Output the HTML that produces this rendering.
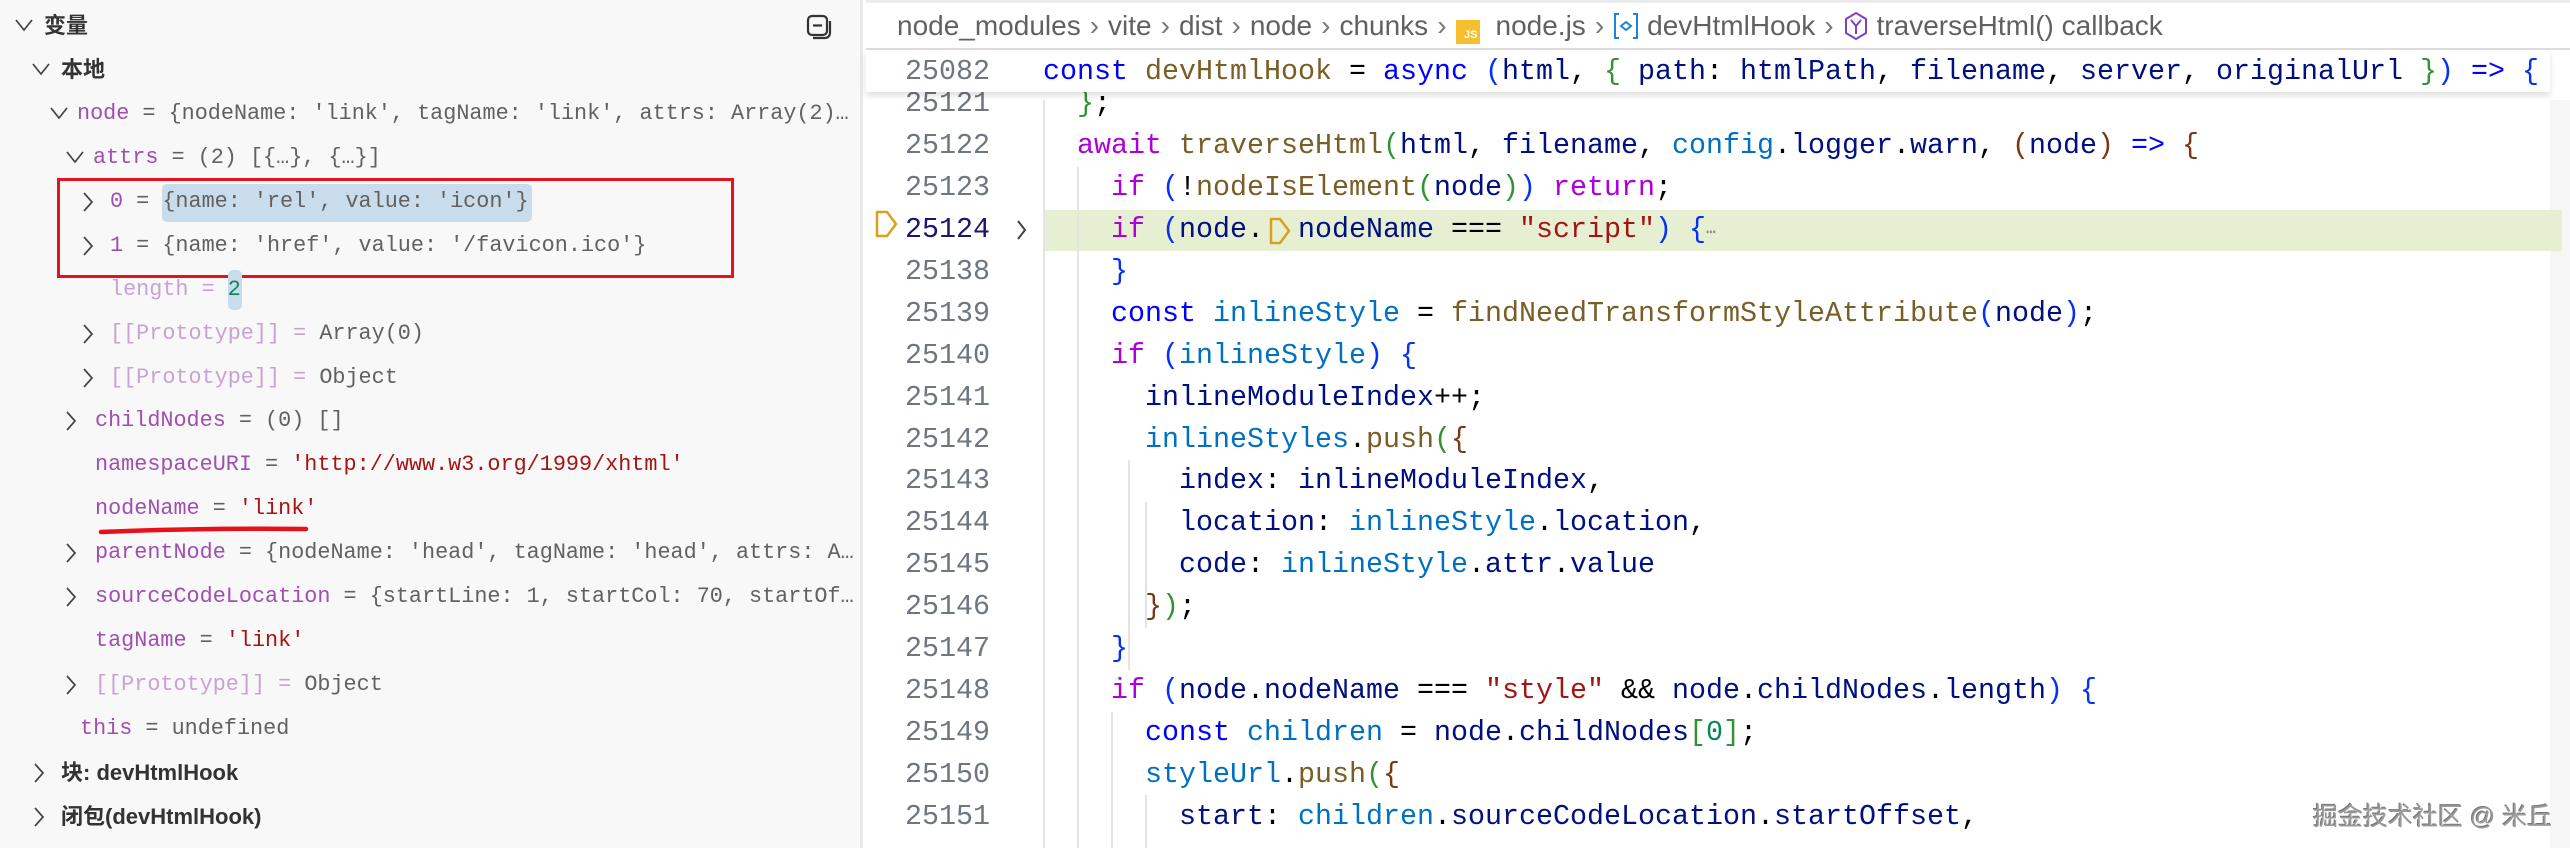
<!DOCTYPE html>
<html><head><meta charset="utf-8">
<style>
*{margin:0;padding:0;box-sizing:border-box}
body{width:2570px;height:848px;overflow:hidden;background:#fff;position:relative;font-family:"Liberation Sans","Noto Sans CJK SC",sans-serif}
#left{position:absolute;left:0;top:0;width:863px;height:848px;background:#f8f8f8;border-right:3px solid #e8e8e8}
.r{position:absolute;height:44px;line-height:44px;white-space:pre;font-family:"Liberation Mono",monospace;font-size:21.8px;color:#616161}
.h{font-family:"Liberation Sans","Noto Sans CJK SC",sans-serif;font-weight:bold;color:#333;font-size:22px}
.ch{position:absolute;width:20px;height:44px}
.pn{color:#a04fb0}.pl{color:#c9a2d4}.st{color:#a31515}.nm{color:#098658}
#bc{position:absolute;left:897px;top:0;height:49px;line-height:52px;font-size:28px;color:#616161;white-space:pre}
.sep{color:#777;margin:0 9px}
.cl{position:absolute;left:0;height:42px;line-height:42px;white-space:pre;font-family:"Liberation Mono",monospace;font-size:28.33px;color:#000}
.ln{position:absolute;left:880px;width:110px;text-align:right;color:#6e7681}
.cd{position:absolute;left:1043px}
.k{color:#0000ff}.c{color:#af00db}.f{color:#795e26}.v{color:#001080}.p{color:#0070c1}.s{color:#a31515}.n{color:#098658}
.b1{color:#0431fa}.b2{color:#319331}.b3{color:#7b3814}
.g{position:absolute;width:2px;background:#e4e4e4}
</style></head><body>
<div id="left">
<div class="r h" style="left:44px;top:4px">变量</div>
<svg class="ch" style="left:14px;top:4px" viewBox="0 0 20 44"><path d="M2 16l8 10 8-10" fill="none" stroke="#444" stroke-width="1.7"/></svg>
<svg style="position:absolute;left:806px;top:14px" width="27" height="26" viewBox="0 0 27 26"><rect x="2" y="2" width="19" height="19" rx="4" fill="none" stroke="#333" stroke-width="2.2"/><path d="M7 11.5h9" stroke="#333" stroke-width="2.2"/><path d="M24 7v12a5 5 0 0 1-5 5H7" fill="none" stroke="#333" stroke-width="2.2"/></svg>

<div class="r h" style="left:61px;top:48px">本地</div>
<svg class="ch" style="left:31px;top:48px" viewBox="0 0 20 44"><path d="M2 16l8 10 8-10" fill="none" stroke="#444" stroke-width="1.7"/></svg>

<svg class="ch" style="left:49px;top:92px" viewBox="0 0 20 44"><path d="M2 16l8 10 8-10" fill="none" stroke="#444" stroke-width="1.7"/></svg>
<div class="r" style="left:77px;top:92px"><span class="pn">node</span> = {nodeName: 'link', tagName: 'link', attrs: Array(2)…</div>

<svg class="ch" style="left:65px;top:136px" viewBox="0 0 20 44"><path d="M2 16l8 10 8-10" fill="none" stroke="#444" stroke-width="1.7"/></svg>
<div class="r" style="left:93px;top:136px"><span class="pn">attrs</span> = (2) [{…}, {…}]</div>

<div style="position:absolute;left:162px;top:184px;width:370px;height:38px;background:#c9dceb;border-radius:5px"></div>
<svg class="ch" style="left:78px;top:180px" viewBox="0 0 20 44"><path d="M6 13l8 9-8 9" fill="none" stroke="#444" stroke-width="1.7"/></svg>
<div class="r" style="left:110px;top:180px"><span class="pn">0</span> = {name: 'rel', value: 'icon'}</div>

<svg class="ch" style="left:78px;top:224px" viewBox="0 0 20 44"><path d="M6 13l8 9-8 9" fill="none" stroke="#444" stroke-width="1.7"/></svg>
<div class="r" style="left:110px;top:224px"><span class="pn">1</span> = {name: 'href', value: '/favicon.ico'}</div>

<div style="position:absolute;left:57px;top:178px;width:677px;height:100px;border:3.5px solid #e8101c"></div>

<div style="position:absolute;left:228px;top:270px;width:14px;height:40px;background:#c9dceb;border-radius:5px"></div>
<div class="r" style="left:110px;top:268px"><span class="pl">length</span> <span class="pl">=</span> <span class="nm">2</span></div>

<svg class="ch" style="left:78px;top:312px" viewBox="0 0 20 44"><path d="M6 13l8 9-8 9" fill="none" stroke="#444" stroke-width="1.7"/></svg>
<div class="r" style="left:110px;top:312px"><span class="pl">[[Prototype]]</span> <span class="pl">=</span> Array(0)</div>

<svg class="ch" style="left:78px;top:356px" viewBox="0 0 20 44"><path d="M6 13l8 9-8 9" fill="none" stroke="#444" stroke-width="1.7"/></svg>
<div class="r" style="left:110px;top:356px"><span class="pl">[[Prototype]]</span> <span class="pl">=</span> Object</div>

<svg class="ch" style="left:61px;top:399px" viewBox="0 0 20 44"><path d="M6 13l8 9-8 9" fill="none" stroke="#444" stroke-width="1.7"/></svg>
<div class="r" style="left:95px;top:399px"><span class="pn">childNodes</span> = (0) []</div>

<div class="r" style="left:95px;top:443px"><span class="pn">namespaceURI</span> = <span class="st">'http://www.w3.org/1999/xhtml'</span></div>
<div class="r" style="left:95px;top:487px"><span class="pn">nodeName</span> = <span class="st">'link'</span></div>
<svg style="position:absolute;left:98px;top:524px" width="212" height="12"><path d="M3 8 Q100 4 208 5" stroke="#e8101c" stroke-width="4.5" fill="none" stroke-linecap="round"/></svg>

<svg class="ch" style="left:61px;top:531px" viewBox="0 0 20 44"><path d="M6 13l8 9-8 9" fill="none" stroke="#444" stroke-width="1.7"/></svg>
<div class="r" style="left:95px;top:531px"><span class="pn">parentNode</span> = {nodeName: 'head', tagName: 'head', attrs: A…</div>

<svg class="ch" style="left:61px;top:575px" viewBox="0 0 20 44"><path d="M6 13l8 9-8 9" fill="none" stroke="#444" stroke-width="1.7"/></svg>
<div class="r" style="left:95px;top:575px"><span class="pn">sourceCodeLocation</span> = {startLine: 1, startCol: 70, startOf…</div>

<div class="r" style="left:95px;top:619px"><span class="pn">tagName</span> = <span class="st">'link'</span></div>

<svg class="ch" style="left:61px;top:663px" viewBox="0 0 20 44"><path d="M6 13l8 9-8 9" fill="none" stroke="#444" stroke-width="1.7"/></svg>
<div class="r" style="left:95px;top:663px"><span class="pl">[[Prototype]]</span> <span class="pl">=</span> Object</div>

<div class="r" style="left:80px;top:707px"><span class="pn">this</span> = undefined</div>

<svg class="ch" style="left:29px;top:751px" viewBox="0 0 20 44"><path d="M6 13l8 9-8 9" fill="none" stroke="#444" stroke-width="1.7"/></svg>
<div class="r h" style="left:61px;top:751px">块: devHtmlHook</div>
<svg class="ch" style="left:29px;top:795px" viewBox="0 0 20 44"><path d="M6 13l8 9-8 9" fill="none" stroke="#444" stroke-width="1.7"/></svg>
<div class="r h" style="left:61px;top:795px">闭包(devHtmlHook)</div>
</div>

<div style="position:absolute;left:866px;top:0;width:1704px;height:3px;background:#ececec"></div>
<div style="position:absolute;left:866px;top:48px;width:1704px;height:2px;background:#dcdcdc"></div>
<div id="bc">node_modules<span class="sep">›</span>vite<span class="sep">›</span>dist<span class="sep">›</span>node<span class="sep">›</span>chunks<span class="sep">›</span><span style="display:inline-block;width:24px;height:24px;background:#f5c02b;color:#fff;font-size:11px;line-height:30px;text-align:right;vertical-align:-3px;margin-right:16px;padding-right:2px;font-weight:bold">JS</span>node.js<span class="sep">›</span><svg width="26" height="28" viewBox="0 0 26 28" style="vertical-align:-5px;margin-right:8px"><path d="M6 2H2v24h4M20 2h4v24h-4" fill="none" stroke="#1a85d6" stroke-width="2"/><path d="M8 14l5-4 5 4-5 4z" fill="none" stroke="#1a85d6" stroke-width="2"/></svg>devHtmlHook<span class="sep">›</span><svg width="26" height="30" viewBox="0 0 26 30" style="vertical-align:-6px;margin-right:8px"><path d="M13 2l10 6v14l-10 6-10-6V8z" fill="none" stroke="#7f3fbf" stroke-width="2"/><path d="M8 9l5 6 5-6M13 15v8" fill="none" stroke="#7f3fbf" stroke-width="2"/></svg>traverseHtml() callback</div>

<div style="position:absolute;left:2550px;top:100px;width:20px;height:748px;background:#f6f6f6"></div>

<div style="position:absolute;left:1043px;top:210px;width:1519px;height:41px;background:#e7efd3"></div>

<div class="g" style="left:1043px;top:100px;height:748px"></div>
<div class="g" style="left:1077px;top:167px;height:681px"></div>
<div class="g" style="left:1111px;top:712px;height:136px"></div>
<div class="g" style="left:1128px;top:460px;height:210px"></div>
<div class="g" style="left:1145px;top:502px;height:126px"></div>
<div class="g" style="left:1145px;top:795px;height:53px"></div>

<div class="cl" style="top:83px"><span class="ln">25121</span><span class="cd">  <span class="b2">}</span>;</span></div>
<div class="cl" style="top:125px"><span class="ln">25122</span><span class="cd">  <span class="c">await</span> <span class="f">traverseHtml</span><span class="b2">(</span><span class="v">html</span>, <span class="v">filename</span>, <span class="p">config</span>.<span class="v">logger</span>.<span class="v">warn</span>, <span class="b3">(</span><span class="v">node</span><span class="b3">)</span> <span class="k">=&gt;</span> <span class="b3">{</span></span></div>
<div class="cl" style="top:167px"><span class="ln">25123</span><span class="cd">    <span class="c">if</span> <span class="b1">(</span>!<span class="f">nodeIsElement</span><span class="b2">(</span><span class="v">node</span><span class="b2">)</span><span class="b1">)</span> <span class="c">return</span>;</span></div>
<div class="cl" style="top:209px"><span class="ln" style="color:#1d1570">25124</span><span class="cd">    <span class="c">if</span> <span class="b1">(</span><span class="v">node</span>.  <span class="v">nodeName</span> === <span class="s">"script"</span><span class="b1">)</span> <span class="b1">{</span><span style="color:#888;font-size:16px">⋯</span></span></div>
<div class="cl" style="top:251px"><span class="ln">25138</span><span class="cd">    <span class="b1">}</span></span></div>
<div class="cl" style="top:293px"><span class="ln">25139</span><span class="cd">    <span class="k">const</span> <span class="p">inlineStyle</span> = <span class="f">findNeedTransformStyleAttribute</span><span class="b1">(</span><span class="v">node</span><span class="b1">)</span>;</span></div>
<div class="cl" style="top:335px"><span class="ln">25140</span><span class="cd">    <span class="c">if</span> <span class="b1">(</span><span class="p">inlineStyle</span><span class="b1">)</span> <span class="b1">{</span></span></div>
<div class="cl" style="top:377px"><span class="ln">25141</span><span class="cd">      <span class="v">inlineModuleIndex</span>++;</span></div>
<div class="cl" style="top:419px"><span class="ln">25142</span><span class="cd">      <span class="p">inlineStyles</span>.<span class="f">push</span><span class="b2">(</span><span class="b3">{</span></span></div>
<div class="cl" style="top:460px"><span class="ln">25143</span><span class="cd">        <span class="v">index</span>: <span class="v">inlineModuleIndex</span>,</span></div>
<div class="cl" style="top:502px"><span class="ln">25144</span><span class="cd">        <span class="v">location</span>: <span class="p">inlineStyle</span>.<span class="v">location</span>,</span></div>
<div class="cl" style="top:544px"><span class="ln">25145</span><span class="cd">        <span class="v">code</span>: <span class="p">inlineStyle</span>.<span class="v">attr</span>.<span class="v">value</span></span></div>
<div class="cl" style="top:586px"><span class="ln">25146</span><span class="cd">      <span class="b3">}</span><span class="b2">)</span>;</span></div>
<div class="cl" style="top:628px"><span class="ln">25147</span><span class="cd">    <span class="b1">}</span></span></div>
<div class="cl" style="top:670px"><span class="ln">25148</span><span class="cd">    <span class="c">if</span> <span class="b1">(</span><span class="v">node</span>.<span class="v">nodeName</span> === <span class="s">"style"</span> &amp;&amp; <span class="v">node</span>.<span class="v">childNodes</span>.<span class="v">length</span><span class="b1">)</span> <span class="b1">{</span></span></div>
<div class="cl" style="top:712px"><span class="ln">25149</span><span class="cd">      <span class="k">const</span> <span class="p">children</span> = <span class="v">node</span>.<span class="v">childNodes</span><span class="b2">[</span><span class="n">0</span><span class="b2">]</span>;</span></div>
<div class="cl" style="top:754px"><span class="ln">25150</span><span class="cd">      <span class="p">styleUrl</span>.<span class="f">push</span><span class="b2">(</span><span class="b3">{</span></span></div>
<div class="cl" style="top:796px"><span class="ln">25151</span><span class="cd">        <span class="v">start</span>: <span class="p">children</span>.<span class="v">sourceCodeLocation</span>.<span class="v">startOffset</span>,</span></div>

<svg style="position:absolute;left:874px;top:208px" width="26" height="32" viewBox="0 0 26 32"><path d="M3 4h10l9 12-9 12H3z" fill="none" stroke="#d9a21b" stroke-width="2.5" stroke-linejoin="round"/></svg>
<svg style="position:absolute;left:1015px;top:218px" width="14" height="24" viewBox="0 0 14 24"><path d="M3 3l7 9-7 9" fill="none" stroke="#444" stroke-width="2"/></svg>
<svg style="position:absolute;left:1267px;top:216px" width="26" height="30" viewBox="0 0 26 30"><path d="M4 3h9l9 12-9 12H4z" fill="none" stroke="#d9a21b" stroke-width="2.5" stroke-linejoin="round"/></svg>

<div style="position:absolute;left:866px;top:50px;width:1684px;height:42px;background:#fff;box-shadow:0 4px 6px rgba(0,0,0,0.12)"></div>
<div class="cl" style="top:51px"><span class="ln">25082</span><span class="cd"><span class="k">const</span> <span class="f">devHtmlHook</span> = <span class="k">async</span> <span class="b1">(</span><span class="v">html</span>, <span class="b2">{</span> <span class="v">path</span>: <span class="v">htmlPath</span>, <span class="v">filename</span>, <span class="v">server</span>, <span class="v">originalUrl</span> <span class="b2">}</span><span class="b1">)</span> <span class="k">=&gt;</span> <span class="b1">{</span></span></div>

<div style="position:absolute;left:2313px;top:797px;font-size:25px;color:#9a9a9a;text-shadow:1px 1px 0 #fff,-1px -1px 0 #777;white-space:pre;font-family:'Liberation Sans','Noto Sans CJK SC',sans-serif">掘金技术社区 @ 米丘</div>
</body></html>
